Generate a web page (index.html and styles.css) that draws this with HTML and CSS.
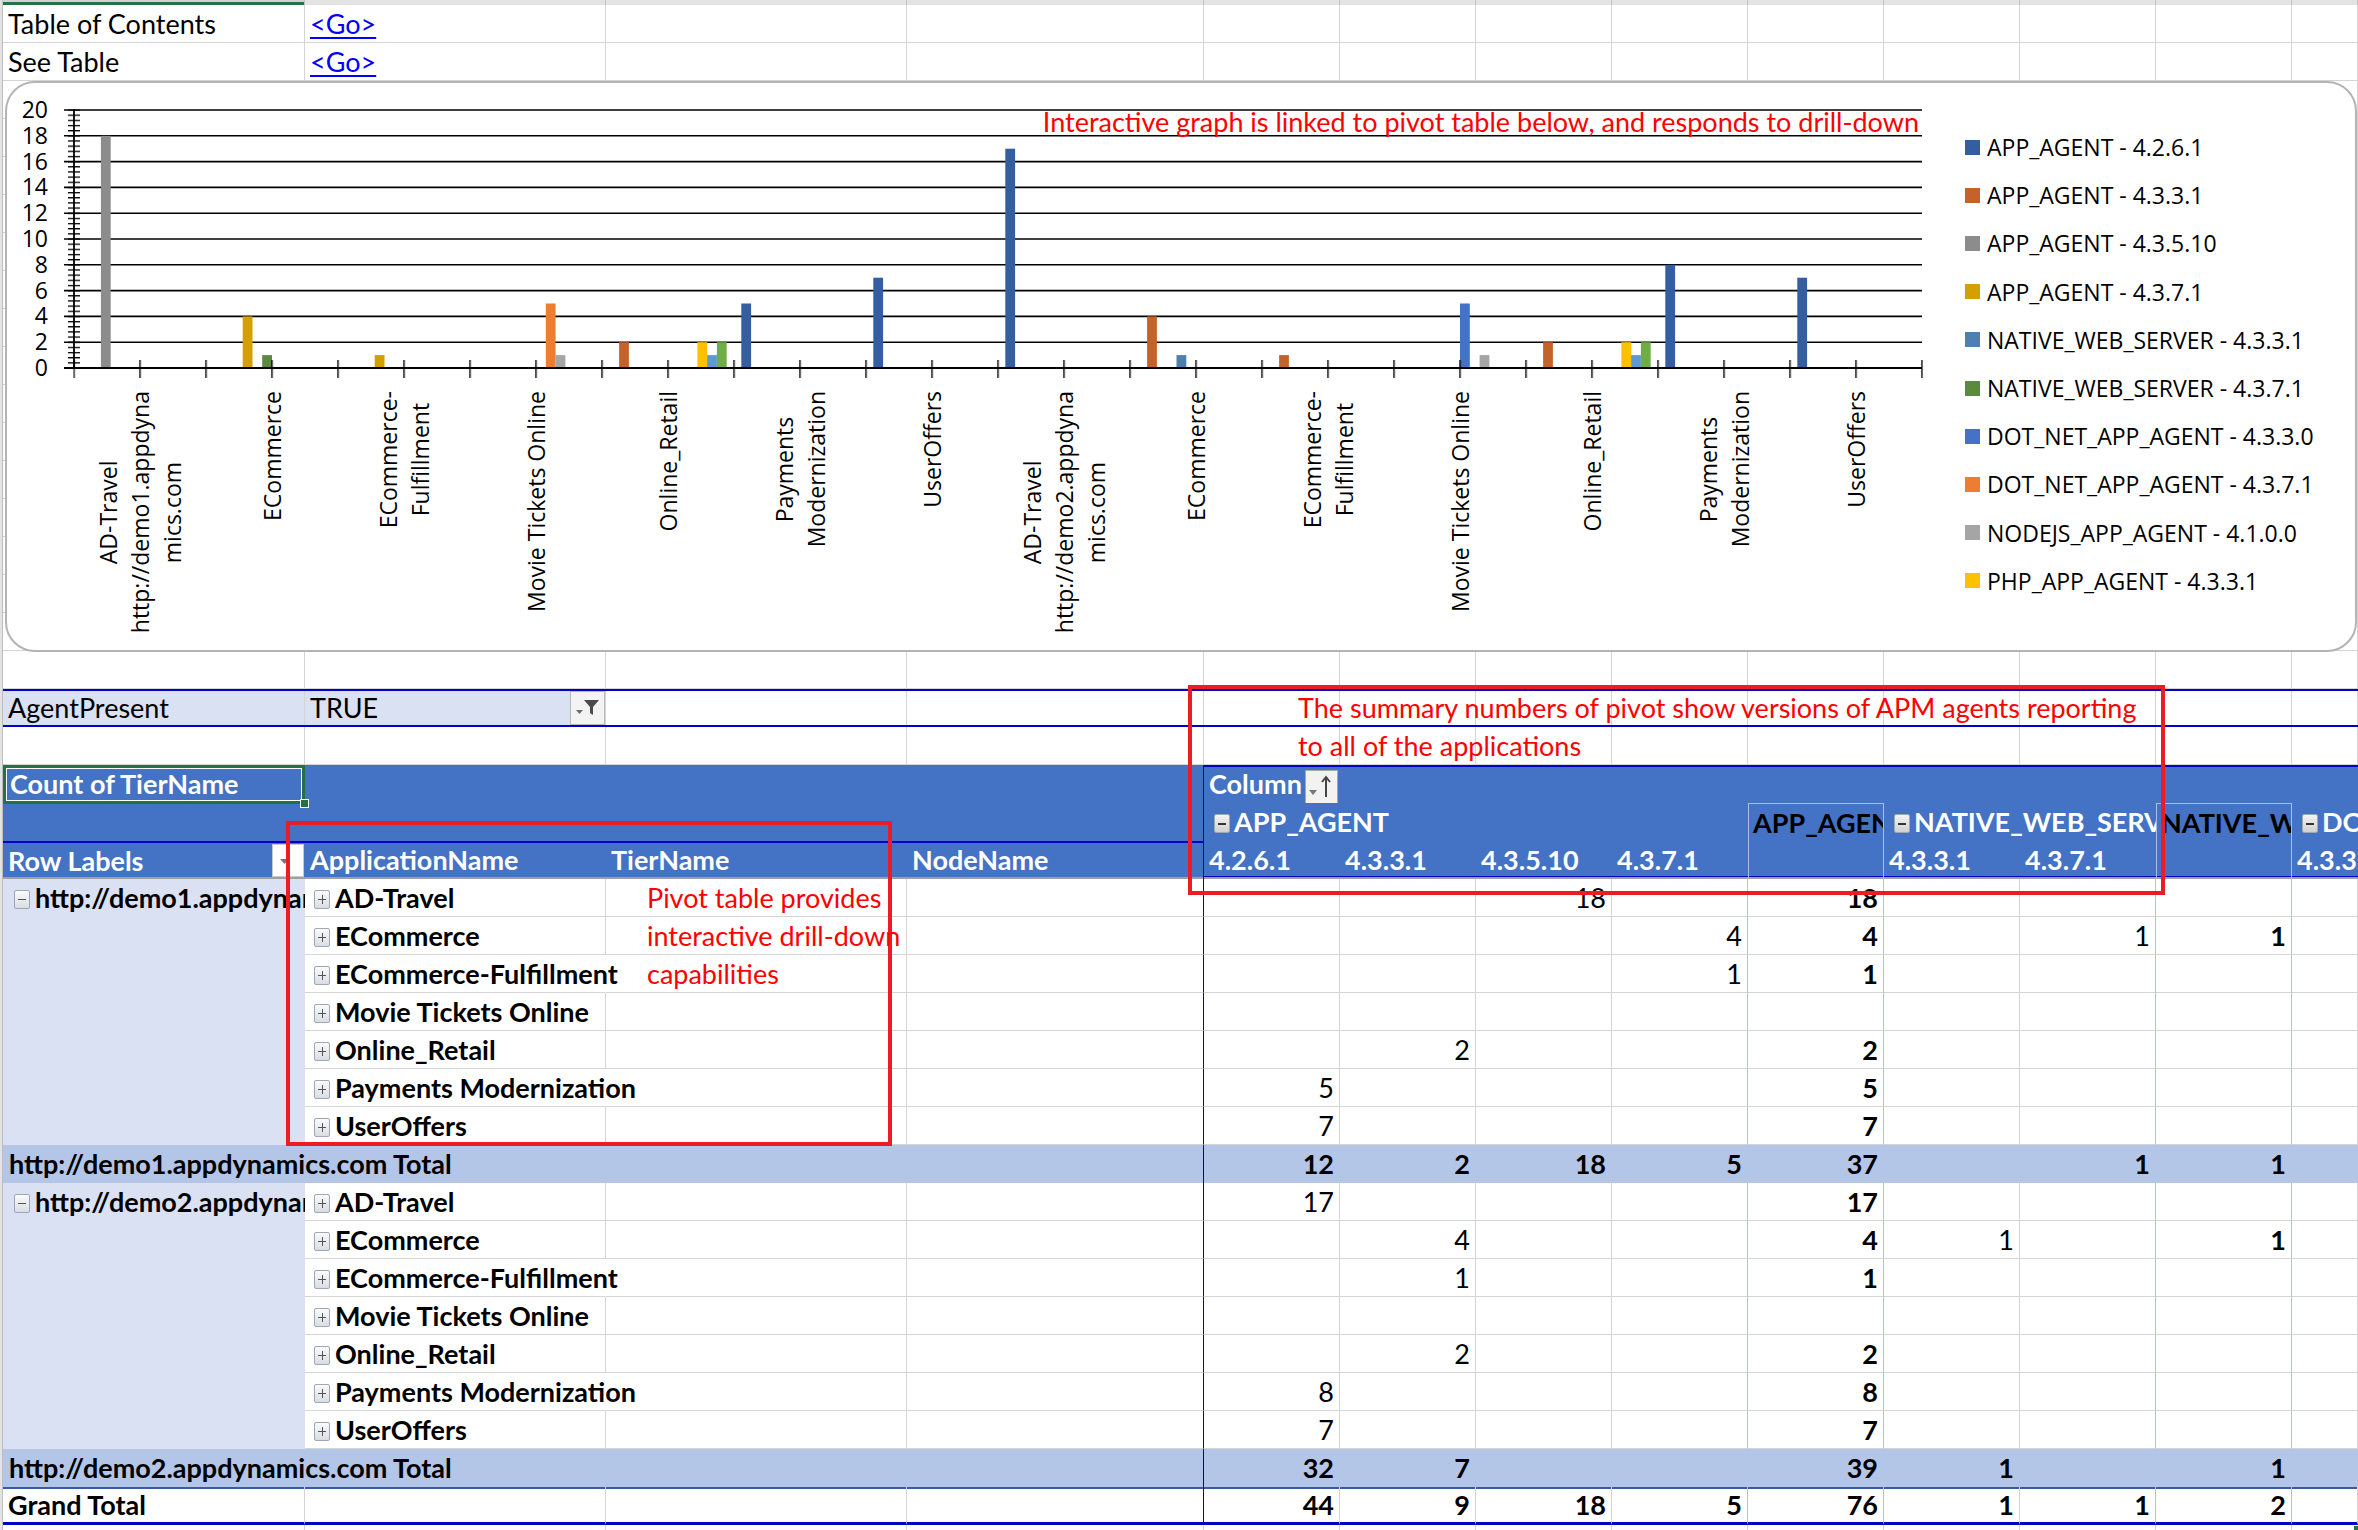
FILE: index.html
```html
<!DOCTYPE html>
<html>
<head>
<meta charset="utf-8">
<title>Pivot</title>
<link rel="stylesheet" href="styles.css">
</head>
<body>
<div class="sheet">
<div class="colhdr"><span></span><span class="sel"></span><span></span><span></span><span></span><span></span><span></span><span></span><span></span><span></span><span></span><span></span><span></span><span></span></div>
<div class="grid">
<div class="row"><span>Table of Contents</span><span><a class="lnk">&lt;Go&gt;</a></span><span></span><span></span><span></span><span></span><span></span><span></span><span></span><span></span><span></span><span></span><span></span></div>
<div class="row"><span>See Table</span><span><a class="lnk">&lt;Go&gt;</a></span><span></span><span></span><span></span><span></span><span></span><span></span><span></span><span></span><span></span><span></span><span></span></div>
<div class="row"><span></span><span></span><span></span><span></span><span></span><span></span><span></span><span></span><span></span><span></span><span></span><span></span><span></span></div>
<div class="row"><span></span><span></span><span></span><span></span><span></span><span></span><span></span><span></span><span></span><span></span><span></span><span></span><span></span></div>
<div class="row"><span></span><span></span><span></span><span></span><span></span><span></span><span></span><span></span><span></span><span></span><span></span><span></span><span></span></div>
<div class="row"><span></span><span></span><span></span><span></span><span></span><span></span><span></span><span></span><span></span><span></span><span></span><span></span><span></span></div>
<div class="row"><span></span><span></span><span></span><span></span><span></span><span></span><span></span><span></span><span></span><span></span><span></span><span></span><span></span></div>
<div class="row"><span></span><span></span><span></span><span></span><span></span><span></span><span></span><span></span><span></span><span></span><span></span><span></span><span></span></div>
<div class="row"><span></span><span></span><span></span><span></span><span></span><span></span><span></span><span></span><span></span><span></span><span></span><span></span><span></span></div>
<div class="row"><span></span><span></span><span></span><span></span><span></span><span></span><span></span><span></span><span></span><span></span><span></span><span></span><span></span></div>
<div class="row"><span></span><span></span><span></span><span></span><span></span><span></span><span></span><span></span><span></span><span></span><span></span><span></span><span></span></div>
<div class="row"><span></span><span></span><span></span><span></span><span></span><span></span><span></span><span></span><span></span><span></span><span></span><span></span><span></span></div>
<div class="row"><span></span><span></span><span></span><span></span><span></span><span></span><span></span><span></span><span></span><span></span><span></span><span></span><span></span></div>
<div class="row"><span></span><span></span><span></span><span></span><span></span><span></span><span></span><span></span><span></span><span></span><span></span><span></span><span></span></div>
<div class="row"><span></span><span></span><span></span><span></span><span></span><span></span><span></span><span></span><span></span><span></span><span></span><span></span><span></span></div>
<div class="row"><span></span><span></span><span></span><span></span><span></span><span></span><span></span><span></span><span></span><span></span><span></span><span></span><span></span></div>
<div class="row"><span></span><span></span><span></span><span></span><span></span><span></span><span></span><span></span><span></span><span></span><span></span><span></span><span></span></div>
<div class="row"><span></span><span></span><span></span><span></span><span></span><span></span><span></span><span></span><span></span><span></span><span></span><span></span><span></span></div>
<div class="row pf"><span class="lt">AgentPresent</span><span class="lt flx">TRUE<i class="fbtn"><svg width="24" height="20" viewBox="0 0 24 20"><path d="M0 12h7l-3.5 4z" fill="#6b6b6b"/><path d="M8 2h15l-6 7v8l-3-2V9z" fill="#4a4a4a"/></svg></i></span><span></span><span></span><span></span><span></span><span></span><span></span><span></span><span></span><span></span><span></span><span></span></div>
<div class="row"><span></span><span></span><span></span><span></span><span></span><span></span><span></span><span></span><span></span><span></span><span></span><span></span><span></span></div>
<div class="row hd h1"><span class="sel">Count of TierName</span><span></span><span></span><span></span><span class="ov">Column<i class="cbtn"><svg width="31" height="32" viewBox="0 0 31 32"><path d="M3 19h8l-4 5z" fill="#777"/><path d="M20 26V6M16 11l4-5 4 5" stroke="#444" stroke-width="2" fill="none"/></svg></i></span><span></span><span></span><span></span><span></span><span></span><span></span><span></span><span></span></div>
<div class="row hd h2"><span></span><span></span><span></span><span></span><span class="s4"><i class="xb"></i>APP_AGENT</span><span class="hbox">APP_AGEN</span><span class="s2"><i class="xb"></i>NATIVE_WEB_SERVER</span><span class="hbox">NATIVE_WEB_SERVER</span><span><i class="xb"></i>DOT_NET_APP_AGENT</span></div>
<div class="row hd h3"><span class="flx">Row Labels<i class="dd"><svg width="30" height="31" viewBox="0 0 30 31"><path d="M7 14h9l-4.5 5z" fill="#777"/></svg></i></span><span>ApplicationName</span><span>TierName</span><span>NodeName</span><span>4.2.6.1</span><span>4.3.3.1</span><span>4.3.5.10</span><span>4.3.7.1</span><span class="hbox"></span><span>4.3.3.1</span><span>4.3.7.1</span><span class="hbox"></span><span>4.3.3.0</span></div>
<div class="row pv"><span class="grp"><i class="xb"></i>http://demo1.appdynamics.com</span><span class="ap"><i class="xb p"></i>AD-Travel</span><span></span><span></span><span></span><span></span><span class="n">18</span><span></span><span class="n t">18</span><span></span><span></span><span></span><span></span></div>
<div class="row pv"><span class="grp"></span><span class="ap"><i class="xb p"></i>ECommerce</span><span></span><span></span><span></span><span></span><span></span><span class="n">4</span><span class="n t">4</span><span></span><span class="n">1</span><span class="n t">1</span><span></span></div>
<div class="row pv"><span class="grp"></span><span class="ap ov"><i class="xb p"></i>ECommerce-Fulfillment</span><span></span><span></span><span></span><span></span><span></span><span class="n">1</span><span class="n t">1</span><span></span><span></span><span></span><span></span></div>
<div class="row pv"><span class="grp"></span><span class="ap"><i class="xb p"></i>Movie Tickets Online</span><span></span><span></span><span></span><span></span><span></span><span></span><span></span><span></span><span></span><span></span><span></span></div>
<div class="row pv"><span class="grp"></span><span class="ap"><i class="xb p"></i>Online_Retail</span><span></span><span></span><span></span><span class="n">2</span><span></span><span></span><span class="n t">2</span><span></span><span></span><span></span><span></span></div>
<div class="row pv"><span class="grp"></span><span class="ap ov"><i class="xb p"></i>Payments Modernization</span><span></span><span></span><span class="n">5</span><span></span><span></span><span></span><span class="n t">5</span><span></span><span></span><span></span><span></span></div>
<div class="row pv"><span class="grp"></span><span class="ap"><i class="xb p"></i>UserOffers</span><span></span><span></span><span class="n">7</span><span></span><span></span><span></span><span class="n t">7</span><span></span><span></span><span></span><span></span></div>
<div class="row st"><span class="lbl">http://demo1.appdynamics.com Total</span><span class="n">12</span><span class="n">2</span><span class="n">18</span><span class="n">5</span><span class="n">37</span><span></span><span class="n">1</span><span class="n">1</span><span></span></div>
<div class="row pv"><span class="grp"><i class="xb"></i>http://demo2.appdynamics.com</span><span class="ap"><i class="xb p"></i>AD-Travel</span><span></span><span></span><span class="n">17</span><span></span><span></span><span></span><span class="n t">17</span><span></span><span></span><span></span><span></span></div>
<div class="row pv"><span class="grp"></span><span class="ap"><i class="xb p"></i>ECommerce</span><span></span><span></span><span></span><span class="n">4</span><span></span><span></span><span class="n t">4</span><span class="n">1</span><span></span><span class="n t">1</span><span></span></div>
<div class="row pv"><span class="grp"></span><span class="ap ov"><i class="xb p"></i>ECommerce-Fulfillment</span><span></span><span></span><span></span><span class="n">1</span><span></span><span></span><span class="n t">1</span><span></span><span></span><span></span><span></span></div>
<div class="row pv"><span class="grp"></span><span class="ap"><i class="xb p"></i>Movie Tickets Online</span><span></span><span></span><span></span><span></span><span></span><span></span><span></span><span></span><span></span><span></span><span></span></div>
<div class="row pv"><span class="grp"></span><span class="ap"><i class="xb p"></i>Online_Retail</span><span></span><span></span><span></span><span class="n">2</span><span></span><span></span><span class="n t">2</span><span></span><span></span><span></span><span></span></div>
<div class="row pv"><span class="grp"></span><span class="ap ov"><i class="xb p"></i>Payments Modernization</span><span></span><span></span><span class="n">8</span><span></span><span></span><span></span><span class="n t">8</span><span></span><span></span><span></span><span></span></div>
<div class="row pv"><span class="grp"></span><span class="ap"><i class="xb p"></i>UserOffers</span><span></span><span></span><span class="n">7</span><span></span><span></span><span></span><span class="n t">7</span><span></span><span></span><span></span><span></span></div>
<div class="row st"><span class="lbl">http://demo2.appdynamics.com Total</span><span class="n">32</span><span class="n">7</span><span></span><span></span><span class="n">39</span><span class="n">1</span><span></span><span class="n">1</span><span></span></div>
<div class="row pv gt"><span>Grand Total</span><span></span><span></span><span></span><span class="n">44</span><span class="n">9</span><span class="n">18</span><span class="n">5</span><span class="n">76</span><span class="n">1</span><span class="n">1</span><span class="n">2</span><span></span></div>
<div class="row"><span></span><span></span><span></span><span></span><span></span><span></span><span></span><span></span><span></span><span></span><span></span><span></span><span></span></div>
</div>

<div class="chart">
<svg class="plot" width="2348" height="567" viewBox="7 83 2348 567">
<defs>
<pattern id="mt" patternUnits="userSpaceOnUse" x="68" y="109.4" width="12" height="5.16"><rect x="0" y="0" width="12" height="1.3" fill="#000"/></pattern>
<pattern id="xt" patternUnits="userSpaceOnUse" x="73.3" y="360" width="66" height="18"><rect x="0" y="0" width="1.4" height="18" fill="#000"/></pattern>
</defs>
<path d="M64 110H1922M64 135.8H1922M64 161.6H1922M64 187.4H1922M64 213.2H1922M64 239H1922M64 264.8H1922M64 290.6H1922M64 316.4H1922M64 342.2H1922" stroke="#000" stroke-width="1.6" fill="none"/>
<rect x="68" y="109.4" width="12" height="259" fill="url(#mt)"/>
<g class="yl" text-anchor="end">
<text x="48" y="118">20</text>
<text x="48" y="143.8">18</text>
<text x="48" y="169.6">16</text>
<text x="48" y="195.4">14</text>
<text x="48" y="221.2">12</text>
<text x="48" y="247">10</text>
<text x="48" y="272.8">8</text>
<text x="48" y="298.6">6</text>
<text x="48" y="324.4">4</text>
<text x="48" y="350.2">2</text>
<text x="48" y="376">0</text>
</g>
<text class="ttl" x="1919" y="132" text-anchor="end">Interactive graph is linked to pivot table below, and responds to drill-down</text>
<g>
<rect x="100.9" y="135.8" width="9.8" height="232.2" fill="#8c8c8c"/>
<rect x="242.7" y="316.4" width="9.8" height="51.6" fill="#d4a000"/>
<rect x="262.2" y="355.1" width="9.8" height="12.9" fill="#5a8a3a"/>
<rect x="374.7" y="355.1" width="9.8" height="12.9" fill="#d4a000"/>
<rect x="545.8" y="303.5" width="9.8" height="64.5" fill="#ed7d31"/>
<rect x="555.6" y="355.1" width="9.8" height="12.9" fill="#a5a5a5"/>
<rect x="619.1" y="342.2" width="9.8" height="25.8" fill="#c5622a"/>
<rect x="697.4" y="342.2" width="9.8" height="25.8" fill="#ffc000"/>
<rect x="707.1" y="355.1" width="9.8" height="12.9" fill="#5b9bd5"/>
<rect x="716.9" y="342.2" width="9.8" height="25.8" fill="#70ad47"/>
<rect x="741.3" y="303.5" width="9.8" height="64.5" fill="#355ea1"/>
<rect x="873.3" y="277.7" width="9.8" height="90.3" fill="#355ea1"/>
<rect x="1005.3" y="148.7" width="9.8" height="219.3" fill="#355ea1"/>
<rect x="1147.1" y="316.4" width="9.8" height="51.6" fill="#c5622a"/>
<rect x="1176.5" y="355.1" width="9.8" height="12.9" fill="#4d7fb3"/>
<rect x="1279.1" y="355.1" width="9.8" height="12.9" fill="#c5622a"/>
<rect x="1460" y="303.5" width="9.8" height="64.5" fill="#4472c4"/>
<rect x="1479.6" y="355.1" width="9.8" height="12.9" fill="#a5a5a5"/>
<rect x="1543.1" y="342.2" width="9.8" height="25.8" fill="#c5622a"/>
<rect x="1621.4" y="342.2" width="9.8" height="25.8" fill="#ffc000"/>
<rect x="1631.1" y="355.1" width="9.8" height="12.9" fill="#5b9bd5"/>
<rect x="1640.9" y="342.2" width="9.8" height="25.8" fill="#70ad47"/>
<rect x="1665.3" y="264.8" width="9.8" height="103.2" fill="#355ea1"/>
<rect x="1797.3" y="277.7" width="9.8" height="90.3" fill="#355ea1"/>
</g>
<path d="M74 109V368M64 368H1922" stroke="#000" stroke-width="1.8" fill="none"/>
<rect x="73.3" y="360" width="1850" height="18" fill="url(#xt)"/>
</svg>
<div class="xaxis">
<div class="cat"><div class="xl">AD-Travel<br>http://demo1.appdyna<br>mics.com</div></div>
<div class="cat"><div class="xl">ECommerce</div></div>
<div class="cat"><div class="xl">ECommerce-<br>Fulfillment</div></div>
<div class="cat"><div class="xl">Movie Tickets Online</div></div>
<div class="cat"><div class="xl">Online_Retail</div></div>
<div class="cat"><div class="xl">Payments<br>Modernization</div></div>
<div class="cat"><div class="xl">UserOffers</div></div>
<div class="cat"><div class="xl">AD-Travel<br>http://demo2.appdyna<br>mics.com</div></div>
<div class="cat"><div class="xl">ECommerce</div></div>
<div class="cat"><div class="xl">ECommerce-<br>Fulfillment</div></div>
<div class="cat"><div class="xl">Movie Tickets Online</div></div>
<div class="cat"><div class="xl">Online_Retail</div></div>
<div class="cat"><div class="xl">Payments<br>Modernization</div></div>
<div class="cat"><div class="xl">UserOffers</div></div>
</div>
<div class="legend">
<div class="li"><span class="sw c0"></span>APP_AGENT - 4.2.6.1</div>
<div class="li"><span class="sw c1"></span>APP_AGENT - 4.3.3.1</div>
<div class="li"><span class="sw c2"></span>APP_AGENT - 4.3.5.10</div>
<div class="li"><span class="sw c3"></span>APP_AGENT - 4.3.7.1</div>
<div class="li"><span class="sw c4"></span>NATIVE_WEB_SERVER - 4.3.3.1</div>
<div class="li"><span class="sw c5"></span>NATIVE_WEB_SERVER - 4.3.7.1</div>
<div class="li"><span class="sw c6"></span>DOT_NET_APP_AGENT - 4.3.3.0</div>
<div class="li"><span class="sw c7"></span>DOT_NET_APP_AGENT - 4.3.7.1</div>
<div class="li"><span class="sw c8"></span>NODEJS_APP_AGENT - 4.1.0.0</div>
<div class="li"><span class="sw c9"></span>PHP_APP_AGENT - 4.3.3.1</div>
</div>
</div>

<div class="redbox box1"></div>
<div class="redbox box2"></div>
<div class="note note1">Pivot table provides<br>interactive drill-down<br>capabilities</div>
<div class="note note2">The summary numbers of pivot show versions of APM agents reporting<br>to all of the applications</div>
</div>
</body>
</html>
```

FILE: styles.css
```css
html, body {
  margin: 0;
  padding: 0;
  background: #fff;
}

.sheet {
  position: relative;
  width: 2358px;
  height: 1530px;
  overflow: hidden;
  background: #fff;
  font-family: Lato, "Liberation Sans", Arial, sans-serif;
  font-size: 27px;
  color: #000;
}

/* column header strip */
.colhdr {
  display: grid;
  grid-template-columns: 3px 302px 301px 301px 297px repeat(8, 136px) 1fr;
  height: 5px;
  background: #e3e3e3;
}
.colhdr span { border-right: 1px solid #c2c2c2; }
.colhdr .sel { background: #d2d2d2; box-shadow: inset 0 -3px #217346; }

.grid {
  padding-left: 3px;
  background: linear-gradient(90deg, #e3e3e3 0, #e3e3e3 2px, #bdbdbd 2px, #bdbdbd 3px, #fff 3px);
}

.row {
  display: grid;
  grid-template-columns: 302px 301px 301px 297px repeat(8, 136px) 66px;
  height: 38px;
}
.row > span {
  box-sizing: border-box;
  min-width: 0;
  padding: 0 5px;
  border-right: 1px solid #d4d4d4;
  border-bottom: 1px solid #d4d4d4;
  line-height: 37px;
  white-space: nowrap;
  overflow: hidden;
}
.row > .ov { overflow: visible; border-right-color: transparent; }

.lnk {
  color: #0000ff;
  text-decoration: underline;
  text-decoration-thickness: 2px;
  text-underline-offset: 3px;
}

/* page field row */
.pf {
  box-sizing: border-box;
  border-top: 2px solid #0000c8;
  border-bottom: 2px solid #0000c8;
}
.pf > span { border-bottom: none; line-height: 34px; }
.pf > .lt { background: #dae1f3; }
.flx { display: flex; align-items: center; }
.pf > .flx { padding-right: 0; }
.fbtn {
  margin-left: auto;
  width: 35px;
  height: 34px;
  box-sizing: border-box;
  border: 1px solid #b9b9b9;
  background: #f3f3f3;
  display: flex;
  align-items: center;
  justify-content: center;
}

/* pivot header */
.hd > span {
  background: #4472c4;
  color: #fff;
  font-weight: 700;
  border: none;
}
.hd > span:nth-child(4) { border-right: 1px solid #0000c8; }
.h1 > span:nth-child(n+5) { box-shadow: inset 0 2px #0000c8; }
.h3 > span { box-shadow: inset 0 -2px #a0a0a0; }
.h3 > span:nth-child(-n+4) { box-shadow: inset 0 2px #0000c8, inset 0 -2px #a0a0a0; }
.h3 > span:nth-child(n+5) { box-shadow: inset 0 -2px #a0a0a0, inset 0 -3px #0000c8; }
.hd > .hbox {
  color: #000;
  border-left: 1px solid #a9bde6;
  border-right: 1px solid #a9bde6;
  padding-left: 4px;
}
.h2 > .hbox { border-top: 1px solid #a9bde6; }
.s4 { grid-column: span 4; }
.s2 { grid-column: span 2; }
.h3 > .flx { padding-right: 1px; }

.hd > .sel {
  position: relative;
  overflow: visible;
  padding-left: 7px;
  box-shadow: inset 0 0 0 3px #217346, inset 0 0 0 4px #fff;
}
.sel::after {
  content: "";
  position: absolute;
  right: -4px;
  bottom: -4px;
  width: 7px;
  height: 7px;
  background: #217346;
  border: 1px solid #fff;
}
.cbtn {
  display: inline-flex;
  vertical-align: middle;
  width: 33px;
  height: 34px;
  box-sizing: border-box;
  border: 1px solid #a8a8a8;
  background: #f2f2f2;
  margin-left: 3px;
  align-items: center;
  justify-content: center;
}
.dd {
  margin-left: auto;
  width: 32px;
  height: 33px;
  box-sizing: border-box;
  border: 1px solid #c9c9c9;
  background: #fff;
  display: flex;
  align-items: center;
  justify-content: center;
}

/* expand / collapse boxes */
.xb {
  display: inline-block;
  width: 16px;
  height: 19px;
  box-sizing: border-box;
  border: 1px solid #9ea7b6;
  border-radius: 2px;
  vertical-align: middle;
  margin: -3px 5px 0 0;
  background: linear-gradient(#555, #555) center / 8px 1px no-repeat, linear-gradient(#fbfbfb, #d9dde3);
}
.xb.p {
  background: linear-gradient(#555, #555) center / 8px 1px no-repeat, linear-gradient(#555, #555) center / 1px 9px no-repeat, linear-gradient(#fbfbfb, #d9dde3);
}
.hd .xb {
  margin-left: 5px;
  margin-right: 4px;
  background: linear-gradient(#333, #333) center / 8px 2px no-repeat, linear-gradient(#f4f4f4, #d0d0d0);
}

/* pivot body */
.pv > span:nth-child(4) { border-right-color: #0000c8; }
.pv > span:nth-child(8),
.pv > span:nth-child(9),
.pv > span:nth-child(11),
.pv > span:nth-child(12) { border-right-color: #b4c2e2; }
.pv > .grp {
  background: #dae1f3;
  border-right: none;
  border-bottom: none;
  font-weight: 700;
  padding-left: 11px;
}
.pv > .ap { font-weight: 700; padding-left: 9px; }
.pv > .ap.ov { border-right-color: transparent; }
.n { text-align: right; }
.t { font-weight: 700; }

/* subtotal rows */
.st > span {
  background: #b4c6e7;
  font-weight: 700;
  border-bottom: none;
  border-right-color: transparent;
}
.row.st > .lbl {
  grid-column: span 4;
  padding-left: 6px;
  border-right: 1px solid #0000c8;
}

.gt > span {
  font-weight: 700;
  border-bottom: 3px solid #0000c8;
  box-shadow: inset 0 2px #3c5a9e;
  line-height: 36px;
}

/* overlays */
.redbox {
  position: absolute;
  box-sizing: border-box;
  border: 4px solid #ed1c24;
}
.box1 { left: 286px; top: 821px; width: 606px; height: 325px; }
.box2 { left: 1188px; top: 685px; width: 977px; height: 210px; }

.note {
  position: absolute;
  color: #ff0000;
  line-height: 38px;
  white-space: nowrap;
}
.note1 { left: 647px; top: 879px; }
.note2 { left: 1298px; top: 689px; }

/* chart */
.chart {
  position: absolute;
  left: 5px;
  top: 81px;
  width: 2352px;
  height: 571px;
  box-sizing: border-box;
  border: 2px solid #b4b4b4;
  border-radius: 30px;
  background: #fff;
  overflow: hidden;
  font-family: "Open Sans", "DejaVu Sans", sans-serif;
  font-size: 23px;
  color: #000;
}
.plot { position: absolute; left: 0; top: 0; display: block; }
.yl { font-size: 23px; fill: #000; }
.ttl { font-family: Lato, "Liberation Sans", sans-serif; font-size: 27px; fill: #ff0000; }

.xaxis {
  position: absolute;
  left: 67px;
  top: 308px;
  display: flex;
  align-items: flex-start;
}
.cat { width: 132px; display: flex; justify-content: center; }
.xl {
  writing-mode: vertical-rl;
  transform: rotate(180deg);
  text-align: center;
  line-height: 32px;
  white-space: nowrap;
}

.legend { position: absolute; left: 1958px; top: 40px; }
.li {
  height: 48.2px;
  display: flex;
  align-items: center;
  gap: 7px;
  white-space: nowrap;
}
.sw { width: 15px; height: 15px; flex: none; }
.c0 { background: #355ea1; }
.c1 { background: #c5622a; }
.c2 { background: #8c8c8c; }
.c3 { background: #d4a000; }
.c4 { background: #4d7fb3; }
.c5 { background: #5a8a3a; }
.c6 { background: #4472c4; }
.c7 { background: #ed7d31; }
.c8 { background: #a5a5a5; }
.c9 { background: #ffc000; }
```
